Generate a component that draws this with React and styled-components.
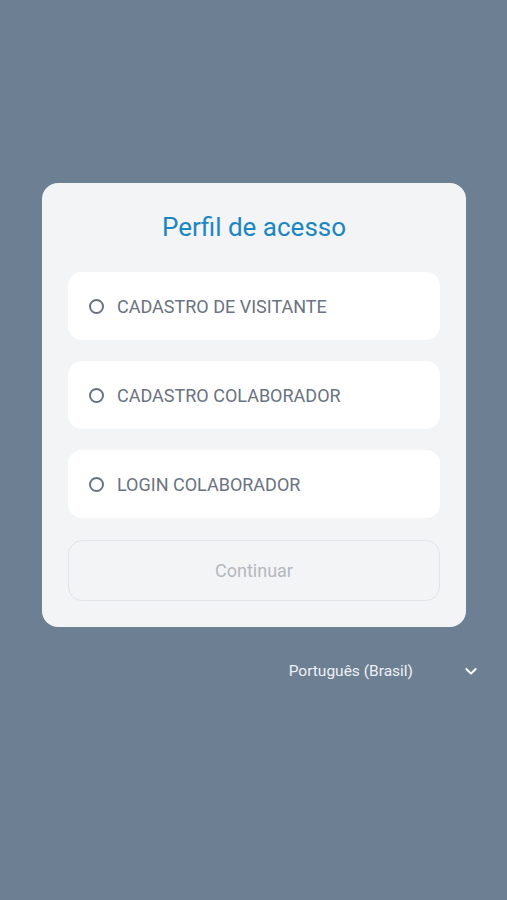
import React, { useState } from "react";
import styled, { createGlobalStyle } from "styled-components";

const OPTIONS = [
  { id: "visitante", label: "CADASTRO DE VISITANTE" },
  { id: "cadastro", label: "CADASTRO COLABORADOR" },
  { id: "login", label: "LOGIN COLABORADOR" },
];

const GlobalStyle = createGlobalStyle`
  html, body {
    margin: 0;
    padding: 0;
    background: #6d7f92;
    font-family: Roboto, "Liberation Sans", sans-serif;
  }
`;

export default function App() {
  const [selected, setSelected] = useState(null);

  return (
    <Page>
      <GlobalStyle />
      <Card>
        <Title>Perfil de acesso</Title>
        <OptionList>
          {OPTIONS.map((option) => (
            <Option key={option.id} onClick={() => setSelected(option.id)}>
              <Radio $checked={selected === option.id} />
              {option.label}
            </Option>
          ))}
        </OptionList>
        <ContinueButton disabled={!selected}>Continuar</ContinueButton>
      </Card>
      <LanguageRow>
        <LanguageLabel>Português (Brasil)</LanguageLabel>
        <svg width="16" height="16" viewBox="0 0 24 24" fill="none">
          <path
            d="M5 9l7 7 7-7"
            stroke="#ffffff"
            strokeWidth="3"
            strokeLinecap="round"
            strokeLinejoin="round"
          />
        </svg>
      </LanguageRow>
    </Page>
  );
}

const Page = styled.div`
  min-height: 900px;
  box-sizing: border-box;
  padding: 183px 41px 0 42px;
`;

const Card = styled.div`
  background: #f3f4f6;
  border-radius: 16px;
  padding: 26px;
  display: flex;
  flex-direction: column;
`;

const Title = styled.h1`
  margin: 0 0 27px;
  text-align: center;
  font-size: 26px;
  line-height: 36px;
  font-weight: 400;
  color: #1c86c1;
`;

const OptionList = styled.div`
  display: flex;
  flex-direction: column;
  gap: 21px;
  margin-bottom: 22px;
`;

const Option = styled.div`
  display: flex;
  align-items: center;
  gap: 13px;
  height: 68px;
  padding: 0 21px;
  background: #ffffff;
  border-radius: 14px;
  color: #6b7280;
  font-size: 18px;
  cursor: pointer;
`;

const Radio = styled.span`
  width: 11px;
  height: 11px;
  border-radius: 50%;
  border: 2px solid ${(p) => (p.$checked ? "#1c86c1" : "#6b7280")};
  background: ${(p) => (p.$checked ? "#1c86c1" : "transparent")};
  flex-shrink: 0;
`;

const ContinueButton = styled.button`
  height: 61px;
  border: 1px solid #e1e4e8;
  border-radius: 14px;
  background: #f3f4f6;
  color: #b3b8be;
  font-family: inherit;
  font-size: 18px;
`;

const LanguageRow = styled.div`
  display: flex;
  justify-content: flex-end;
  align-items: center;
  gap: 50px;
  margin: 35px -13px 0 0;
`;

const LanguageLabel = styled.span`
  color: #eef1f4;
  font-size: 15.5px;
`;
